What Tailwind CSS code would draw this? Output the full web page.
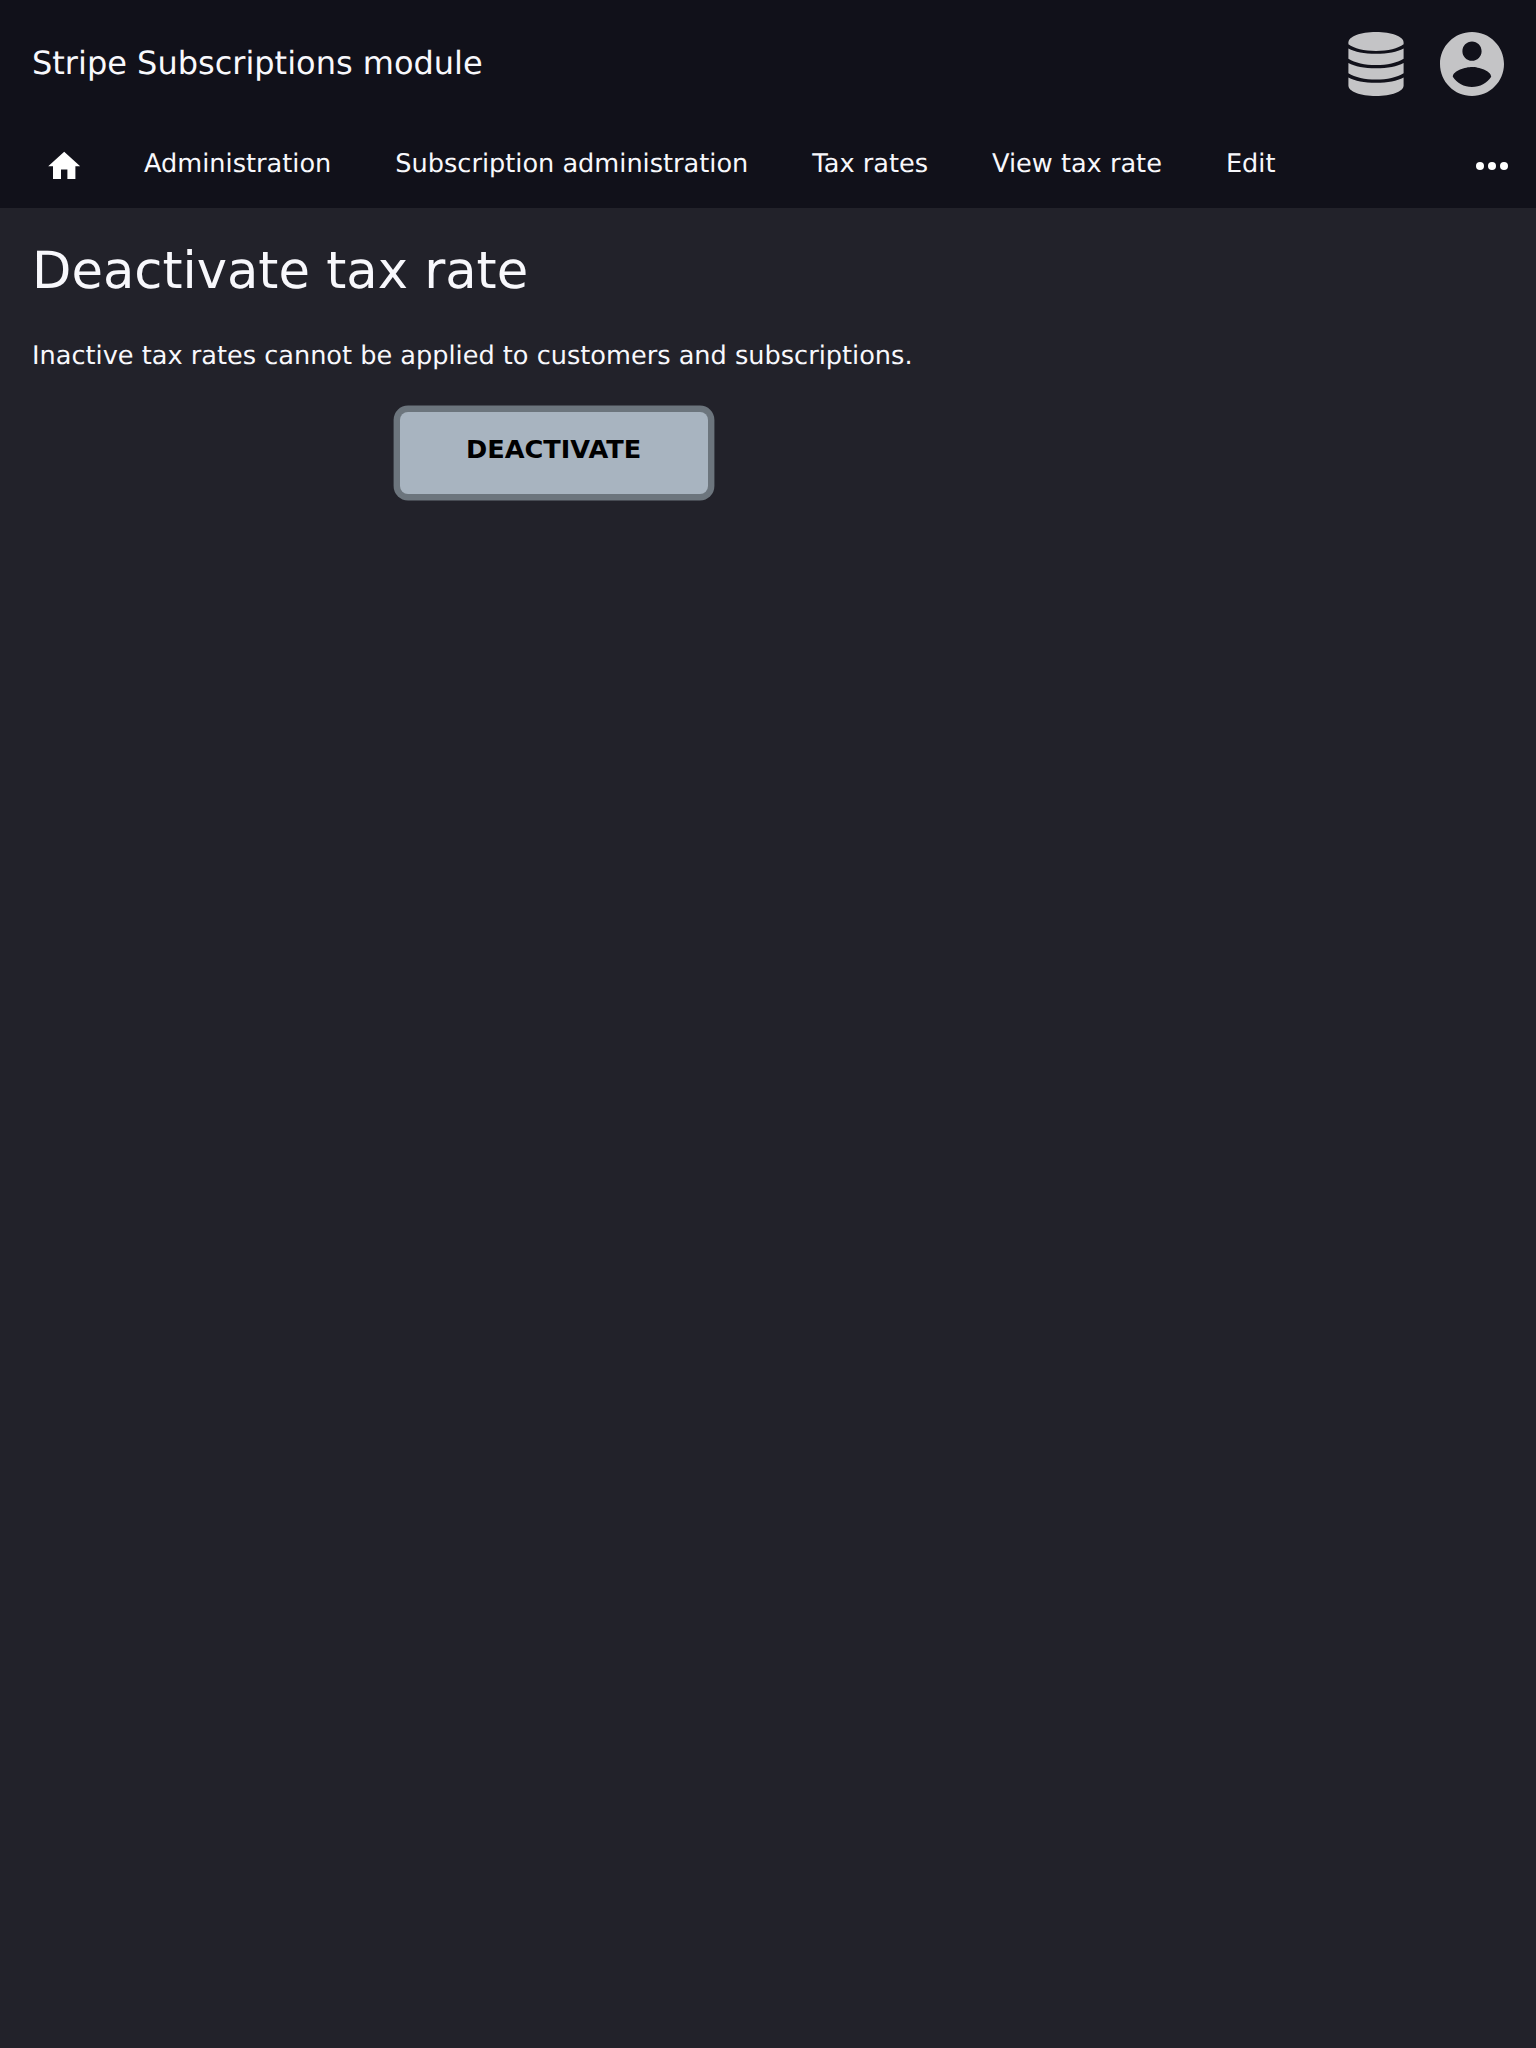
<!DOCTYPE html>
<html lang="en">
<head>
<meta charset="utf-8">
<title>Deactivate tax rate</title>
<script src="https://cdn.jsdelivr.net/npm/@tailwindcss/browser@4"></script>
</head>
<body class="min-h-screen bg-[#22222a] text-[#f8f8fc] font-['DejaVu_Sans',sans-serif] text-[25.6px] leading-[38.4px] [text-rendering:geometricPrecision]">
<header class="h-52 bg-[#11111a]">
  <div class="flex h-32 items-center justify-between px-8">
    <div class="pb-0.5 text-[32px] leading-[48px]">Stripe Subscriptions module</div>
    <div class="flex items-center gap-9 text-[#c4c4c6]">
      <svg class="h-16 w-14" viewBox="0 0 56 64" fill="currentColor">
        <path d="M28 0C43.500 0 55.600 4.500 55.600 10.500V12.300C50 16.600 40 18.900 28 18.900S6 16.600 .4 12.300V10.500C.4 4.500 12.500 0 28 0Z"/>
        <path d="M.4 16.500C7 20 16 21.800 28 21.800S49 20 55.600 16.500V26.800C49 31 39 33.100 28 33.100S7 31 .4 26.800Z"/>
        <path d="M.4 31C7 34.500 16 36.300 28 36.300S49 34.500 55.600 31V41.300C49 45.500 39 47.600 28 47.600S7 45.500 .4 41.300Z"/>
        <path d="M.4 45.500C7 49 16 50.800 28 50.800S49 49 55.600 45.500V53.500C55.600 59.500 43.500 64 28 64S.4 59.500 .4 53.500Z"/>
      </svg>
      <svg class="size-16" viewBox="2 2 20 20" fill="currentColor"><path d="M12 2C6.480 2 2 6.480 2 12s4.480 10 10 10 10-4.480 10-10S17.520 2 12 2zm0 3c1.660 0 3 1.340 3 3s-1.340 3-3 3-3-1.340-3-3 1.340-3 3-3zm0 14.200c-2.500 0-4.710-1.280-6-3.220.03-1.990 4-3.080 6-3.080 1.990 0 5.970 1.090 6 3.080-1.290 1.940-3.500 3.220-6 3.220z"/></svg>
    </div>
  </div>
  <nav class="flex h-20 items-start pl-[44.8px] pr-5">
    <svg class="mt-[19.2px] mr-[60.8px] size-[38.4px] text-white" viewBox="0 0 24 24" fill="currentColor"><path d="M10 20v-6h4v6h5v-8h3L12 3 2 12h3v8z"/></svg>
    <div class="mt-[17px] flex gap-16">
      <a>Administration</a><a>Subscription administration</a><a>Tax rates</a><a>View tax rate</a><a>Edit</a>
    </div>
    <svg class="mt-3.5 ml-auto size-12 text-white" viewBox="0 0 24 24" fill="currentColor"><circle cx="6" cy="12" r="2"/><circle cx="12" cy="12" r="2"/><circle cx="18" cy="12" r="2"/></svg>
  </nav>
</header>
<main class="px-8 pt-[33px]">
  <h1 class="text-[51.2px] leading-[61px]">Deactivate tax rate</h1>
  <p class="mt-[35px]">Inactive tax rates cannot be applied to customers and subscriptions.</p>
  <button class="mt-[36.6px] ml-[367.6px] block h-[82px] w-[308px] rounded-lg bg-[#a8b4c0] pb-2 font-bold text-black ring-[6.4px] ring-[#6c757d]">DEACTIVATE</button>
</main>
</body>
</html>
